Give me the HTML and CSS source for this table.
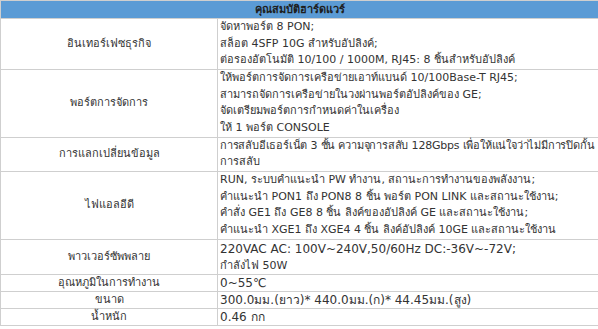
FILE: index.html
```html
<!DOCTYPE html>
<html lang="th">
<head>
<meta charset="utf-8">
<link rel="stylesheet" href="styles.css">
</head>
<body>
<table class="spec">
  <tr><th colspan="2" class="head">คุณสมบัติฮาร์ดแวร์</th></tr>
  <tr>
    <td class="label">อินเทอร์เฟซธุรกิจ</td>
    <td class="val">
      <div class="line">จัดหาพอร์ต 8 PON;</div>
      <div class="line">สล็อต 4SFP 10G สำหรับอัปลิงค์;</div>
      <div class="line">ต่อรองอัตโนมัติ 10/100 / 1000M, RJ45: 8 ชิ้นสำหรับอัปลิงค์</div>
    </td>
  </tr>
  <tr>
    <td class="label">พอร์ตการจัดการ</td>
    <td class="val">
      <div class="line">ให้พอร์ตการจัดการเครือข่ายเอาท์แบนด์ 10/100Base-T RJ45;</div>
      <div class="line">สามารถจัดการเครือข่ายในวงผ่านพอร์ตอัปลิงค์ของ GE;</div>
      <div class="line">จัดเตรียมพอร์ตการกำหนดค่าในเครื่อง</div>
      <div class="line">ให้ 1 พอร์ต CONSOLE</div>
    </td>
  </tr>
  <tr>
    <td class="label">การแลกเปลี่ยนข้อมูล</td>
    <td class="val">
      <div class="line tight">การสลับอีเธอร์เน็ต 3 ชั้น ความจุการสลับ 128Gbps เพื่อให้แน่ใจว่าไม่มีการปิดกั้น</div>
      <div class="line">การสลับ</div>
    </td>
  </tr>
  <tr>
    <td class="label">ไฟแอลอีดี</td>
    <td class="val">
      <div class="line">RUN, ระบบคำแนะนำ PW ทำงาน, สถานะการทำงานของพลังงาน;</div>
      <div class="line">คำแนะนำ PON1 ถึง PON8 8 ชิ้น พอร์ต PON LINK และสถานะใช้งาน;</div>
      <div class="line">คำสั่ง GE1 ถึง GE8 8 ชิ้น ลิงค์ของอัปลิงค์ GE และสถานะใช้งาน;</div>
      <div class="line">คำแนะนำ XGE1 ถึง XGE4 4 ชิ้น ลิงค์อัปลิงค์ 10GE และสถานะใช้งาน</div>
    </td>
  </tr>
  <tr>
    <td class="label">พาวเวอร์ซัพพลาย</td>
    <td class="val">
      <div class="line big tall">220VAC AC: 100V~240V,50/60Hz DC:-36V~-72V;</div>
      <div class="line">กำลังไฟ 50W</div>
    </td>
  </tr>
  <tr>
    <td class="label">อุณหภูมิในการทำงาน</td>
    <td class="val"><div class="line one big">0~55℃</div></td>
  </tr>
  <tr>
    <td class="label">ขนาด</td>
    <td class="val"><div class="line one big">300.0มม.(ยาว)* 440.0มม.(ก)* 44.45มม.(สูง)</div></td>
  </tr>
  <tr>
    <td class="label">น้ำหนัก</td>
    <td class="val"><div class="line one big">0.46 กก</div></td>
  </tr>
</table>
</body>
</html>
```

FILE: styles.css
```css
html, body {
  margin: 0;
  padding: 0;
  background: #ffffff;
}
.spec {
  border-collapse: collapse;
  width: 599px;
  font-family: "DejaVu Sans", Tahoma, sans-serif;
  font-size: 11px;
  color: #333333;
}
.spec td, .spec th {
  border: 1px solid #cfcfcf;
  padding: 0 2px;
  line-height: 16px;
}
.head {
  background: #5b9bd5;
  border-top: 1px solid #d8d8d8;
  color: #1e1e1e;
  font-weight: bold;
  text-align: center;
  height: 17px;
  line-height: 17px;
  padding: 0;
}
.label {
  width: 212px;
  text-align: center;
  vertical-align: middle;
}
.val {
  text-align: left;
  vertical-align: middle;
}
.line {
  height: 16.67px;
  line-height: 16.67px;
  white-space: nowrap;
}
.line.tight {
  letter-spacing: -0.2px;
}
.line.one {
  height: 16px;
  line-height: 16px;
}
.line.tall {
  height: 18px;
  line-height: 18px;
}
.big {
  font-size: 12px;
}
```
